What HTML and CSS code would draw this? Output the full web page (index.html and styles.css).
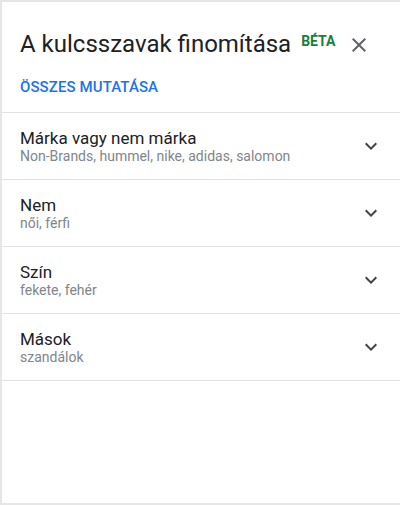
FILE: index.html
```html
<!DOCTYPE html>
<html lang="hu">
<head>
<meta charset="utf-8">
<link rel="stylesheet" href="styles.css">
</head>
<body>
<div class="panel">
  <div class="header">
    <h1 class="title">A kulcsszavak finomítása</h1>
    <span class="beta">BÉTA</span>
    <button class="close" aria-label="Bezárás">
      <svg width="24" height="24" viewBox="0 0 24 24"><path d="M19 6.41L17.59 5 12 10.59 6.41 5 5 6.41 10.59 12 5 17.59 6.41 19 12 13.41 17.59 19 19 17.59 13.41 12z" fill="#5f6368"/></svg>
    </button>
  </div>
  <div class="showall">ÖSSZES MUTATÁSA</div>
  <ul class="list">
    <li class="row">
      <div class="texts"><div class="name">Márka vagy nem márka</div><div class="sub">Non-Brands, hummel, nike, adidas, salomon</div></div>
      <svg class="chev" width="24" height="24" viewBox="0 0 24 24"><path d="M7.41 8.59L12 13.17l4.59-4.58L18 10l-6 6-6-6 1.41-1.41z" fill="#444"/></svg>
    </li>
    <li class="row">
      <div class="texts"><div class="name">Nem</div><div class="sub">női, férfi</div></div>
      <svg class="chev" width="24" height="24" viewBox="0 0 24 24"><path d="M7.41 8.59L12 13.17l4.59-4.58L18 10l-6 6-6-6 1.41-1.41z" fill="#444"/></svg>
    </li>
    <li class="row">
      <div class="texts"><div class="name">Szín</div><div class="sub">fekete, fehér</div></div>
      <svg class="chev" width="24" height="24" viewBox="0 0 24 24"><path d="M7.41 8.59L12 13.17l4.59-4.58L18 10l-6 6-6-6 1.41-1.41z" fill="#444"/></svg>
    </li>
    <li class="row">
      <div class="texts"><div class="name">Mások</div><div class="sub">szandálok</div></div>
      <svg class="chev" width="24" height="24" viewBox="0 0 24 24"><path d="M7.41 8.59L12 13.17l4.59-4.58L18 10l-6 6-6-6 1.41-1.41z" fill="#444"/></svg>
    </li>
  </ul>
</div>
</body>
</html>
```
FILE: styles.css
```css
html, body { margin: 0; padding: 0; }
body { font-family: Roboto, "Noto Sans", Arial, sans-serif; background: #fff; }
.panel {
  box-sizing: border-box;
  width: 400px;
  height: 505px;
  border-top: 2px solid #e6e6e6;
  border-left: 2px solid #e6e6e6;
  border-bottom: 2px solid #e6e6e6;
  background: #fff;
}
.header {
  display: flex;
  align-items: flex-start;
  padding: 28px 0 0 18px;
  height: 30px;
}
.title {
  margin: 0;
  font-size: 24px;
  font-weight: 400;
  line-height: 28px;
  color: #202124;
}
.beta {
  margin-left: 10px;
  margin-top: 3px;
  font-size: 14px;
  font-weight: 700;
  color: #188038;
  line-height: 16px;
}
.close {
  margin-left: 12px;
  margin-top: 3px;
  padding: 0;
  border: 0;
  background: none;
  width: 24px;
  height: 24px;
  display: block;
}
.close svg { display: block; }
.showall {
  padding: 19px 0 0 18px;
  height: 33px;
  font-size: 15px;
  font-weight: 500;
  color: #1a73e8;
  line-height: 16px;
  letter-spacing: 0.1px;
}
.list { list-style: none; margin: 0; padding: 0; border-top: 1px solid #e2e2e2; }
.row {
  display: flex;
  align-items: center;
  height: 66px;
  border-bottom: 1px solid #e2e2e2;
  padding: 0 17px 0 18px;
}
.texts { flex: 1; margin-top: 0; }
.name { font-size: 17px; line-height: 20px; color: #202124; }
.sub { font-size: 14px; line-height: 17px; color: #80868b; }
.chev { display: block; }
```
